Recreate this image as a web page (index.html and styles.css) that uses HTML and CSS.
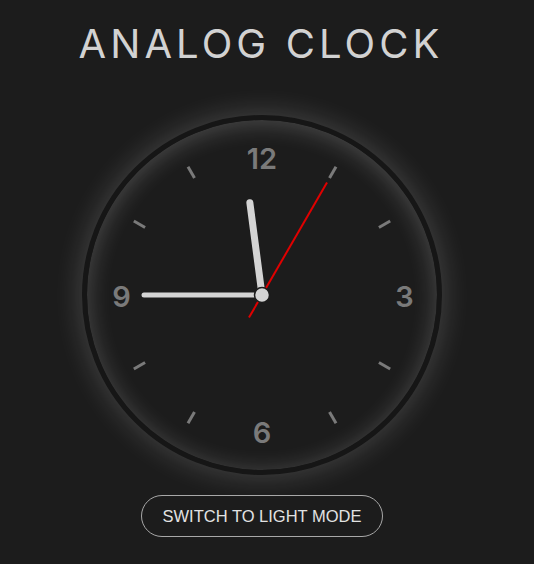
FILE: index.html
```html
<!DOCTYPE html>
<html>
<head>
<meta charset="utf-8">
<link rel="stylesheet" href="styles.css">
</head>
<body>
<main class="page">
  <h1 class="title">ANALOG CLOCK</h1>
  <div class="clock">
    <svg class="face" viewBox="0 0 350 350" width="350" height="350">
      <g class="ticks">
        <line x1="175" y1="40" x2="175" y2="27" transform="rotate(30 175 175)"/>
        <line x1="175" y1="40" x2="175" y2="27" transform="rotate(60 175 175)"/>
        <line x1="175" y1="40" x2="175" y2="27" transform="rotate(120 175 175)"/>
        <line x1="175" y1="40" x2="175" y2="27" transform="rotate(150 175 175)"/>
        <line x1="175" y1="40" x2="175" y2="27" transform="rotate(210 175 175)"/>
        <line x1="175" y1="40" x2="175" y2="27" transform="rotate(240 175 175)"/>
        <line x1="175" y1="40" x2="175" y2="27" transform="rotate(300 175 175)"/>
        <line x1="175" y1="40" x2="175" y2="27" transform="rotate(330 175 175)"/>
      </g>
      <g class="nums">
        <text x="175" y="49">12</text>
        <text x="317.5" y="187">3</text>
        <text x="175" y="323">6</text>
        <text x="34.5" y="187">9</text>
      </g>
      <line class="hand hour" x1="175" y1="175" x2="175" y2="82" transform="rotate(352.5 175 175)"/>
      <line class="hand minute" x1="175" y1="175" x2="57" y2="175"/>
      <line class="hand second" x1="175" y1="201" x2="175" y2="45" transform="rotate(30 175 175)"/>
      <circle class="pin" cx="175" cy="175" r="7.5"/>
    </svg>
  </div>
  <button class="mode-btn" type="button">SWITCH TO LIGHT MODE</button>
</main>
</body>
</html>
```

FILE: styles.css
```css
html, body {
  margin: 0;
  padding: 0;
  background: #1c1c1c;
}

.page {
  width: 524px;
  display: flex;
  flex-direction: column;
  align-items: center;
}

.title {
  margin: 20px 0 0 -2px;
  font-family: "Inter", "Open Sans", sans-serif;
  font-weight: 400;
  font-size: 40px;
  line-height: 48px;
  letter-spacing: 4.1px;
  color: #d2d2d2;
}

.clock {
  margin-top: 47px;
  width: 350px;
  height: 350px;
  border: 5px solid #161616;
  border-radius: 50%;
  background: #1c1c1c;
  box-shadow: 0 0 30px rgba(255, 255, 255, 0.2), inset 0 3px 24px rgba(255, 255, 255, 0.22);
}

.face {
  display: block;
}

.ticks line {
  stroke: #7a7a7a;
  stroke-width: 3;
}

.nums text {
  font-family: "Inter", "Open Sans", sans-serif;
  font-weight: 600;
  font-size: 29px;
  fill: #7a7a7a;
  text-anchor: middle;
}

.hand {
  stroke-linecap: round;
}

.hour {
  stroke: #d4d4d4;
  stroke-width: 7;
}

.minute {
  stroke: #d4d4d4;
  stroke-width: 5;
}

.second {
  stroke: #e00000;
  stroke-width: 2;
  stroke-linecap: butt;
}

.pin {
  fill: #d4d4d4;
  stroke: #1c1c1c;
  stroke-width: 1.5;
}

.mode-btn {
  margin-top: 20px;
  height: 42px;
  padding: 0 21px;
  border: 1px solid #a8a8a8;
  border-radius: 21px;
  background: transparent;
  color: #e2e2e2;
  font-family: "Liberation Sans", Arial, sans-serif;
  font-size: 16.5px;
}
```
